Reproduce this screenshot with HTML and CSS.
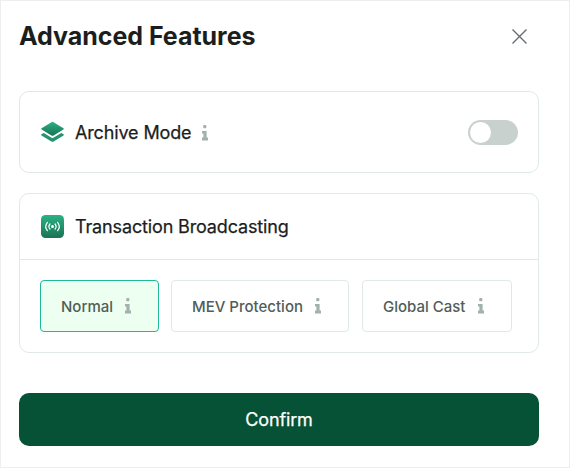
FILE: index.html
```html
<!DOCTYPE html>
<html lang="en"><head><meta charset="utf-8"><title>Advanced Features</title><link rel="stylesheet" href="styles.css"></head>
<body>
<svg class="defs" aria-hidden="true"><defs>
<linearGradient id="green" x1="0" y1="0" x2="0" y2="1"><stop offset="0" stop-color="#2bb184"/><stop offset="1" stop-color="#1a7355"/></linearGradient>
<symbol id="info" viewBox="0 0 8 16"><rect x="2.2" y="0" width="3.2" height="3.2" rx="1"/><path d="M1 6h4.6v6.4H7V15.4H1v-3h1.4V8.6H1z"/></symbol></defs></svg>
<main class="dialog">
<header class="header"><h1>Advanced Features</h1><button class="close" aria-label="Close"><svg width="17" height="17" viewBox="0 0 17 17"><path d="M1.5 1.5l14 14M15.5 1.5l-14 14"/></svg></button></header>
<section class="card archive">
<svg class="icon" width="23" height="23" viewBox="0 0 23 23"><path fill="url(#green)" d="M11.5.8Q12 .8 12.6 1.2L22.4 7.2Q23.2 7.8 22.4 8.4L12.6 14.4Q11.5 15 10.4 14.4L.6 8.4Q-.2 7.8.6 7.2L10.4 1.2Q11 .8 11.5.8z"/><path fill="#23946d" d="M.5 13.2L2.7 12l8.8 5.3 8.8-5.3 2.2 1.2q.8.7 0 1.2l-9.9 6q-1.1.7-2.2 0l-9.9-6q-.8-.5 0-1.2z"/></svg>
<h2>Archive Mode</h2><svg class="info"><use href="#info"/></svg><button class="switch" role="switch" aria-checked="false" aria-label="Archive Mode"><span></span></button>
</section>
<section class="card">
<div class="card-head"><svg class="icon" width="23" height="23" viewBox="0 0 23 23"><rect width="23" height="23" rx="4.5" fill="url(#green)"/><circle cx="11.5" cy="11.5" r="1.5" fill="#fff"/><path class="wave" d="M8.9 9a3.9 3.9 0 0 0 0 5M14.1 9a3.9 3.9 0 0 1 0 5M6.4 7.3a6.7 6.7 0 0 0 0 8.4M16.6 7.3a6.7 6.7 0 0 1 0 8.4"/></svg><h2>Transaction Broadcasting</h2></div>
<div class="options"><button class="option normal selected">Normal<svg class="info"><use href="#info"/></svg></button><button class="option mev">MEV Protection<svg class="info"><use href="#info"/></svg></button><button class="option cast">Global Cast<svg class="info"><use href="#info"/></svg></button></div>
</section>
<button class="confirm">Confirm</button>
</main></body></html>
```
FILE: styles.css
```css
*{box-sizing:border-box}
body{margin:0;font-family:Inter,sans-serif;color:#1c1e1d}
button{font:inherit;margin:0;padding:0}
svg{flex-shrink:0}
.defs{position:absolute;width:0;height:0}
.dialog{width:570px;height:468px;border:1px solid #eee;background:#fff;padding:0 30px 0 18px}
.header{height:90px;display:flex;justify-content:space-between;align-items:flex-start;padding:19px 11px 0 0}
h1{margin:0;font-size:25px;line-height:32px;font-weight:700;letter-spacing:-.03px}
.close{width:17px;height:17px;margin-top:8px;border:0;background:none;display:flex}
.close path{stroke:#656b70;stroke-width:1.4;fill:none}
.card{width:520px;border:1px solid #dfeae7;border-radius:10px}
.archive{height:82px;display:flex;align-items:center;padding:1px 20px 0 21px;margin-bottom:20px}
.icon{margin-right:11px}
h2{margin:0;font-size:18px;line-height:26px;font-weight:400;letter-spacing:-.14px;-webkit-text-stroke:.25px}
.info{width:8px;height:16px;fill:#a2b1ad;margin-left:11px}
.archive .info{margin-left:10px}
.switch{width:50px;height:25px;border:0;border-radius:13px;background:#c9d1cf;margin-left:auto;padding:2px}
.switch span{display:block;width:21px;height:21px;border-radius:50%;background:#fff}
.card-head{height:66px;border-bottom:1px solid #dfeae7;display:flex;align-items:center;padding:0 20px 0 21px}
.wave{stroke:#fff;stroke-width:1.2;fill:none;stroke-linecap:round}
.options{display:flex;padding:20px}
.option{height:52px;border:1px solid #dfeae7;border-radius:4px;background:#fff;color:#515d58;font-size:15px;font-weight:500;display:flex;align-items:center;padding-left:20px;white-space:nowrap}
.normal{width:119px;margin-right:12px}.mev{width:178px;margin-right:13px}.cast{width:150px}
.cast .info{margin-left:12px}
.selected{background:#edfff0;border-color:#20b89a}
.confirm{width:520px;height:53px;margin-top:40px;border:0;border-radius:10px;background:#065237;color:#fff;font-size:18px;font-weight:400;letter-spacing:-.14px;-webkit-text-stroke:.25px;display:block}
```
